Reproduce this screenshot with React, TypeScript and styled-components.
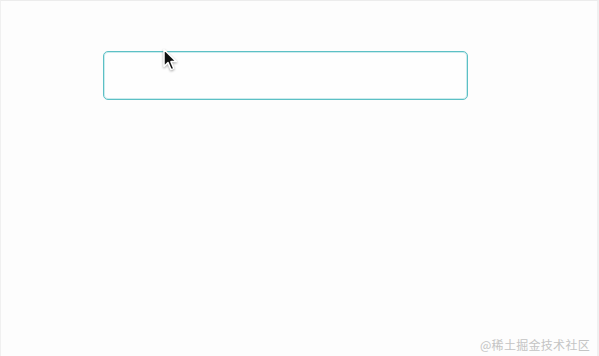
import React from 'react';
import styled, { createGlobalStyle } from 'styled-components';

const GlobalStyle = createGlobalStyle`
  html, body {
    margin: 0;
    padding: 0;
    background: #fdfdfd;
  }
  #root {
    width: 599px;
    height: 356px;
  }
`;

const Frame = styled.div`
  position: relative;
  box-sizing: border-box;
  width: 599px;
  height: 356px;
  border-top: 1px solid #ececec;
  border-left: 1px solid #f0f0f0;
  border-right: 2px solid #f0f0f0;
  background: #fdfdfd;
  padding: 50px 0 0 102px;
  font-family: "Noto Sans", "Noto Sans CJK SC", sans-serif;
`;

const InputBox = styled.div`
  box-sizing: border-box;
  width: 365px;
  height: 49px;
  border: 1px solid #5cc0c5;
  border-radius: 5px;
  background: #fefefe;
  box-shadow: inset 0 0 0 1px rgba(130, 208, 212, 0.4);
`;

const Cursor = styled.svg`
  position: absolute;
  left: 159px;
  top: 45px;
  width: 22px;
  height: 30px;
  filter: drop-shadow(0.5px 1px 1px rgba(0, 0, 0, 0.35));
`;

const Watermark = styled.div`
  position: absolute;
  right: 7px;
  bottom: 3px;
  font-family: "Noto Sans CJK SC", "Noto Sans", sans-serif;
  font-size: 12px;
  color: #c4c4c4;
  letter-spacing: 0.3px;
`;

export default function App() {
  return (
    <>
      <GlobalStyle />
      <Frame>
        <InputBox />
        <Cursor viewBox="0 0 22 30">
          <path
            d="M4 3.5 L4 20.5 L8 16.6 L11 23.6 L13.8 22.4 L10.9 15.6 L16.4 15.6 Z"
            fill="#111"
            stroke="#fff"
            strokeWidth="1.5"
            strokeLinejoin="round"
          />
        </Cursor>
        <Watermark>@稀土掘金技术社区</Watermark>
      </Frame>
    </>
  );
}
